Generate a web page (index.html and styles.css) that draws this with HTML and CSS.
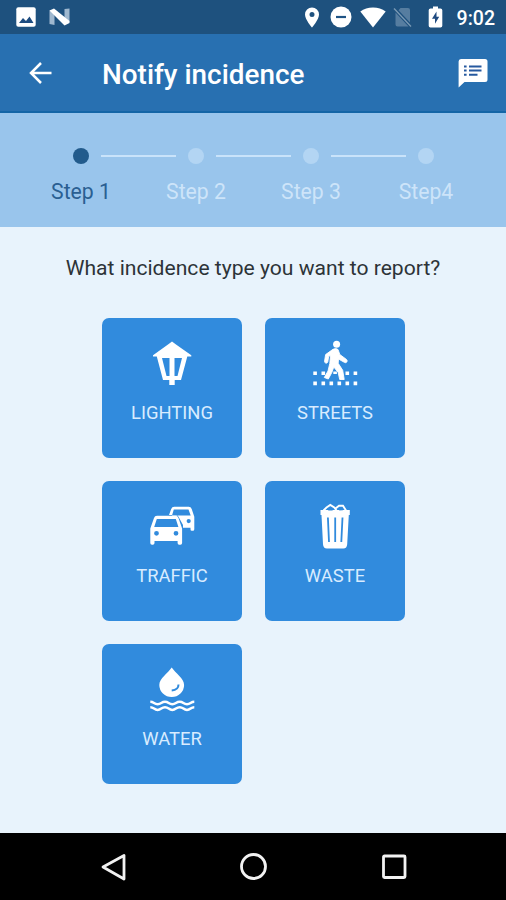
FILE: index.html
```html
<!DOCTYPE html>
<html lang="en">
<head>
    <meta charset="UTF-8">
    <meta name="viewport" content="width=device-width, initial-scale=1.0">
    <title>Notify incidence</title>
    <link rel="stylesheet" href="styles.css">
</head>
<body>
    <div class="status-bar">
        <div class="notifications">
            <svg width="20" height="20" viewBox="0 0 20 20">
                <rect x="0.3" y="0.3" width="19.4" height="19.4" rx="2" fill="#fff"/>
                <path d="M3 16l4-5 3 3 3.500-4.500 4 6.500z" fill="#1d4c80"/>
            </svg>
            <svg width="22" height="18" viewBox="0 0 22 18">
                <path d="M0.500 2.500h5v14.500l-5-1zM15.500 1l5-.5v13l-5 2z" fill="#9fb8cf"/>
                <path d="M0.500 2.500L5 .500 20.500 13v2L15.500 17.500z" fill="#fff"/>
            </svg>
        </div>
        <div class="system">
            <svg width="16" height="21" viewBox="0 0 16 21">
                <path d="M8 .5a7 7 0 0 0-7 7C1 12.500 8 20.500 8 20.500s7-8 7-13a7 7 0 0 0-7-7zm0 4.500a2.500 2.500 0 1 1 0 5 2.500 2.500 0 0 1 0-5z" fill="#fff"/>
            </svg>
            <svg class="dnd" width="22" height="22" viewBox="0 0 22 22">
                <circle cx="11" cy="11" r="10.500" fill="#fff"/>
                <path d="M6 11h10" stroke="#1f5485" stroke-width="2.200"/>
            </svg>
            <svg class="wifi" width="26" height="21" viewBox="0 0 26 21">
                <path d="M13 20.500L.3 4.500C4 1.800 8 .5 13 .5s9 1.300 12.700 4z" fill="#fff"/>
            </svg>
            <svg class="sim" width="19" height="21" viewBox="0 0 19 21">
                <path d="M7.500 1H15q2 0 2 2v12.500L5.500 3.200zM2.500 5.500L15.500 19.500H4.500q-2 0-2-2z" fill="#567da0"/>
                <path d="M1 1.500l17 18" stroke="#7b9ab5" stroke-width="1.300"/>
            </svg>
            <svg class="battery" width="15" height="22" viewBox="0 0 15 22">
                <path d="M5 0.500h5v2h2.500q1.800 0 1.800 1.800v15.400q0 1.800-1.800 1.800h-10q-1.800 0-1.800-1.800V4.300q0-1.800 1.800-1.800H5z" fill="#fff"/>
                <path d="M8.500 5.500L4 12.800h3v5l4.200-7H8.500z" fill="#1f4a80"/>
            </svg>
            <span class="time">9:02</span>
        </div>
    </div>

    <header class="app-bar">
        <svg class="back" width="24" height="24" viewBox="0 0 24 24" fill="none" stroke="#fff" stroke-width="2.500">
            <path d="M23.500 12H3M13 2L3 12l10 10"/>
        </svg>
        <h1>Notify incidence</h1>
        <svg class="feedback" width="30" height="30" viewBox="0 0 30 30">
            <path d="M3 1h24q2.500 0 2.500 2.500v18q0 2.500-2.500 2.500H6.500L.6 29.500V3.500Q.6 1 3 1z" fill="#fff"/>
            <path d="M6 8.500h2.600M6 12.500h2.600M6 16.800h2.600M11 8.500h12.500M11 12.500h12.500M11 16.800h8.500" stroke="#26599f" stroke-width="2"/>
        </svg>
    </header>

    <div class="steps">
        <div class="step active"><span class="dot"></span><span class="label">Step 1</span></div>
        <span class="line"></span>
        <div class="step"><span class="dot"></span><span class="label">Step 2</span></div>
        <span class="line"></span>
        <div class="step"><span class="dot"></span><span class="label">Step 3</span></div>
        <span class="line"></span>
        <div class="step"><span class="dot"></span><span class="label">Step4</span></div>
    </div>

    <main class="content">
        <p class="question">What incidence type you want to report?</p>
        <div class="grid">
            <button class="tile">
                <svg width="48" height="48" viewBox="0 0 48 48" fill="#fff">
                    <path fill-rule="evenodd" d="M24 1.500L28 4.500l15.300 10.800v1.200h-4L33 40h-6.300v5h-5.400v-5H15L8.800 16.500H5v-1.200L20 4.500zM14 18l4.500 18h3V18zM26.500 18v18h3L34 18z"/>
                </svg>
                <span>LIGHTING</span>
            </button>
            <button class="tile">
                <svg width="48" height="48" viewBox="0 0 48 48" fill="#fff">
                    <circle cx="25.600" cy="4.300" r="3.500"/>
                    <path d="M22 9.300q3-1.500 5 .2l1.800 5 6.700 5q1.200 1.200.3 2.500-1 1.200-2.500.3l-5.800-3.300-.3 4.300 4.500 7 1.500 9.200h-4.500l-1.500-7-4.400-5.500-2 5.500-3.500 6.500-4-1.500 3.700-6.500 1.800-7.500.8-8.500-2 1.800-.8 5q-.6 1.700-2 1.300-1.500-.5-1.200-2l1-6.500z" stroke="#fff" stroke-width=".9" stroke-linejoin="round"/>
                    <path d="M2.300 31.500h3.600v3.600H2.300zM10.500 31.500h3.600v3.600h-3.600zM22.300 31.500h3.600v2.500h-3.600zM34.500 31.500h3.600v3.600h-3.600zM42.600 31.500h3.600v3.600h-3.600zM2.300 41.600h3.600v3.600H2.300zM10.500 41.600h3.600v3.600h-3.600zM18.500 41.600h3.600v3.600h-3.600zM26.500 41.600h3.600v3.600h-3.600zM34.500 41.600h3.600v3.600h-3.600zM42.600 41.600h3.600v3.600h-3.600z"/>
                </svg>
                <span>STREETS</span>
            </button>
            <button class="tile">
                <svg width="48" height="48" viewBox="0 0 48 48" fill="#fff">
                    <path fill-rule="evenodd" d="M21 12l2.200-6q.8-2.300 3-2.300h14.500q2.200 0 3 2.300l2.600 7.800v12.500q0 1.500-1.500 1.500h-1q-1.300 0-1.300-1.500v-1.600h-7.500V22L30.500 13.800 29 12zM25.800 6.500L24 12.500h18.700l-2.200-6zM40.700 16a2.100 2.100 0 1 0 0 4.200 2.100 2.100 0 0 0 0-4.200z"/>
                    <path fill-rule="evenodd" d="M9 12.700h18.500q2.300 0 3 2.200l3.600 10.600V40q0 1.800-1.700 1.800h-1.200q-1.600 0-1.600-1.800v-2H6.500v2q0 1.800-1.700 1.800H4q-1.700 0-1.700-1.800V25.500L6 14.900q.7-2.200 3-2.200zM8.800 16L6.200 24h24.200L27.800 16zM8.500 27.900a2.400 2.400 0 1 0 0 4.800 2.400 2.400 0 0 0 0-4.800zM28 27.900a2.400 2.400 0 1 0 0 4.800 2.400 2.400 0 0 0 0-4.800z"/>
                </svg>
                <span>TRAFFIC</span>
            </button>
            <button class="tile">
                <svg width="48" height="48" viewBox="0 0 48 48" fill="#fff">
                    <path d="M9.500 7h29.300v5h-1l-1.600 29.200q-.3 4.200-3.800 4.200H15.900q-3.600 0-3.900-4.200L10.500 12h-1z"/>
                    <path d="M12.500 7.500l3-3 3.800-2.500 4 2.500L25.500 7.500M24.500 5.500l3.500-2.800h4L35 7.500" fill="none" stroke="#fff" stroke-width="1.900"/>
                    <path d="M17 7.500q1.500-3 3.500-1l1.500 1zM28 7.500q2-3 4-.2z" fill="#318bdd"/>
                    <path d="M16.900 14.500L18 39M24.200 14.500V39M31.500 14.500L30.300 39" stroke="#318bdd" stroke-width="1.800"/>
                </svg>
                <span>WASTE</span>
            </button>
            <button class="tile">
                <svg width="48" height="48" viewBox="0 0 48 48" fill="#fff">
                    <path d="M23.700 1.500C20 7 11.300 12.500 11.300 19a12.400 12 0 0 0 24.800 0C36.100 12.500 27.500 7 23.700 1.500z"/>
                    <path d="M30.500 18.500q0 5.500-6.800 6" fill="none" stroke="#318bdd" stroke-width="2"/>
                    <path d="M2.300 35.700C6 35.700 6 38.200 9.600 38.200S13.300 35.700 17 35.700s3.700 2.500 7.300 2.500 3.700-2.500 7.400-2.500 3.700 2.500 7.300 2.500 3.600-2.500 7.300-2.500M2.300 41.200C6 41.200 6 43.900 9.600 43.900S13.300 41.200 17 41.200s3.700 2.700 7.300 2.700 3.700-2.700 7.400-2.700 3.700 2.700 7.300 2.700 3.600-2.700 7.300-2.700" fill="none" stroke="#fff" stroke-width="2.500"/>
                </svg>
                <span>WATER</span>
            </button>
        </div>
    </main>

    <nav class="nav-bar">
        <svg width="28" height="28" viewBox="0 0 28 28"><path d="M26 2.500v23.500L5 14z"/></svg>
        <svg width="28" height="28" viewBox="0 0 28 28"><circle cx="14.500" cy="13.500" r="12"/></svg>
        <svg width="28" height="28" viewBox="0 0 28 28"><rect x="3.500" y="3" width="21.500" height="21.500" rx="1"/></svg>
    </nav>
</body>
</html>
```
FILE: styles.css
```css
* {
    box-sizing: border-box;
}

body {
    font-family: Roboto, sans-serif;
    margin: 0;
    height: 900px;
    display: flex;
    flex-direction: column;
    background: #e8f3fc;
    overflow: hidden;
}

svg {
    display: block;
    flex: none;
}

.status-bar {
    height: 34px;
    padding: 0 11px 0 16px;
    display: flex;
    justify-content: space-between;
    align-items: center;
    background: #1e517e;
}

.notifications,
.system {
    display: flex;
    align-items: center;
}

.notifications {
    gap: 13px;
}

.dnd {
    margin-left: 10px;
}

.wifi {
    margin-left: 8px;
}

.sim {
    margin-left: 7px;
}

.battery {
    margin-left: 16px;
}

.time {
    margin-left: 14px;
    padding-top: 3px;
    color: #fff;
    font-size: 19.5px;
    font-weight: 500;
    line-height: 31px;
}

.app-bar {
    height: 79px;
    padding: 0 18px 0 28px;
    display: flex;
    align-items: center;
    background: #2870b1;
    border-bottom: 2px solid #1465a6;
}

.back {
    margin-top: 1px;
}

.app-bar h1 {
    margin: 4px 0 0 50px;
    flex: 1;
    color: #fff;
    font-size: 27.9px;
    font-weight: 500;
}

.steps {
    height: 114px;
    padding: 35px 22px 0;
    display: flex;
    justify-content: center;
    background: #99c5ec;
}

.step {
    width: 40px;
    display: flex;
    flex-direction: column;
    align-items: center;
    color: #cde4f9;
    white-space: nowrap;
}

.dot {
    width: 16px;
    height: 16px;
    border-radius: 50%;
    background: #b3d5f3;
}

.label {
    margin-top: 15px;
    padding-left: 1px;
    font-size: 21.2px;
    line-height: 26px;
}

.active {
    color: #2a5f92;
}

.active .dot {
    background: #225b8c;
}

.line {
    width: 75px;
    height: 2px;
    margin-top: 7px;
    background: #c9e3fa;
}

.content {
    flex: 1;
    display: flex;
    flex-direction: column;
    align-items: center;
}

.question {
    margin: 28px 0 37px;
    color: #2d3338;
    font-size: 21.1px;
    line-height: 26px;
}

.grid {
    display: grid;
    grid-template-columns: 140px 140px;
    grid-auto-rows: 140px;
    gap: 23px;
}

.tile {
    display: flex;
    flex-direction: column;
    align-items: center;
    justify-content: flex-start;
    padding: 22px 0 0;
    border: none;
    border-radius: 7px;
    background: #318bdd;
    color: #d8ecff;
    font-family: inherit;
    font-size: 18.4px;
    line-height: 22px;
}

.tile span {
    margin-top: 14px;
    padding-left: 1px;
}

.nav-bar {
    height: 67px;
    padding: 0 98px;
    display: flex;
    justify-content: space-between;
    align-items: center;
    background: #000;
}

.nav-bar svg {
    fill: none;
    stroke: #f2f2f2;
    stroke-width: 2.8;
    stroke-linejoin: round;
}
```
